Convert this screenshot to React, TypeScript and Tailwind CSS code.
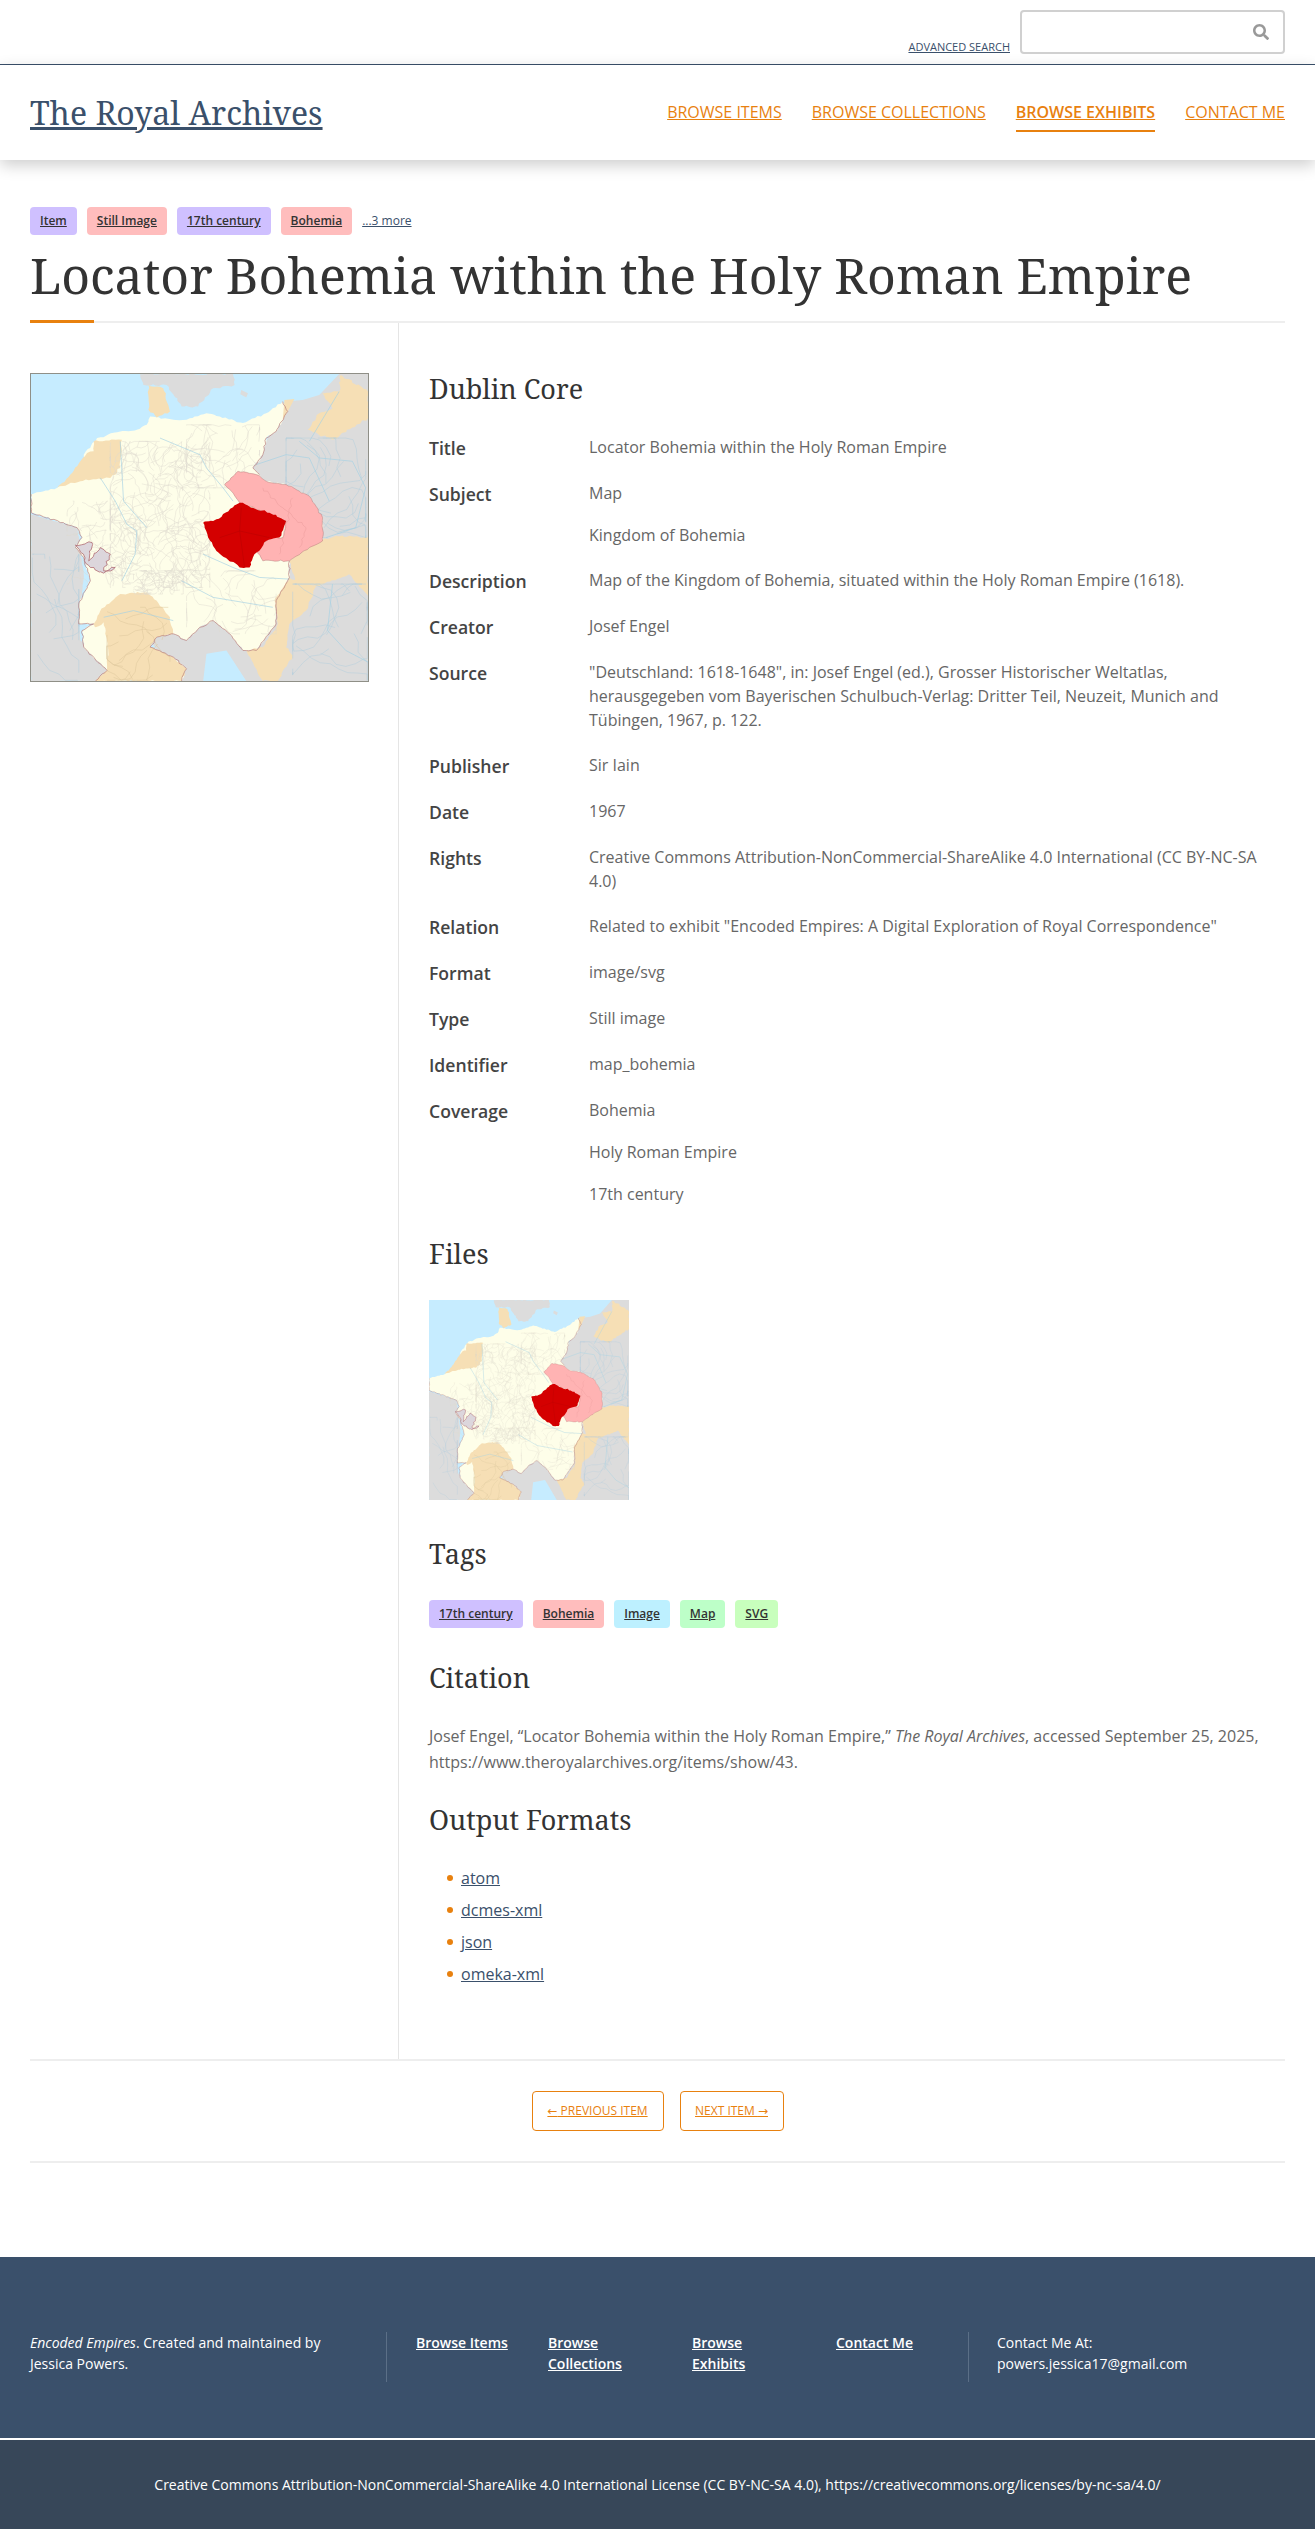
import React from "react";
import { FaSearch } from "react-icons/fa";

const serif = "font-['Noto_Serif','Droid_Serif','DejaVu_Serif',serif]";

// seeded random so the map draws the same every time
function makeRnd(start: number) {
    let seed = start;
    return () => {
        seed = (seed * 16807) % 2147483647;
        return seed / 2147483647;
    };
}

// takes "x,y x,y ..." and makes a jagged closed or open path, borders on the map are not straight
function rough(points: string, start: number, amount: number, closed = true) {
    const rnd = makeRnd(start);
    const pts = points.trim().split(/\s+/).map((p) => p.split(",").map(Number));
    const count = closed ? pts.length : pts.length - 1;
    let d = `M${pts[0][0]},${pts[0][1]}`;
    for (let i = 0; i < count; i++) {
        const [x1, y1] = pts[i];
        const [x2, y2] = pts[(i + 1) % pts.length];
        const steps = Math.max(1, Math.round(Math.hypot(x2 - x1, y2 - y1) / 9));
        for (let s = 1; s <= steps; s++) {
            const t = s / steps;
            const j = s === steps ? 0 : amount;
            d += ` L${(x1 + (x2 - x1) * t + (rnd() - 0.5) * j).toFixed(1)},${(y1 + (y2 - y1) * t + (rnd() - 0.5) * j).toFixed(1)}`;
        }
    }
    return closed ? d + " Z" : d;
}

function walks(start: number, n: number, x: number, y: number, w: number, h: number, len: number, step: number) {
    const rnd = makeRnd(start);
    const out: string[] = [];
    for (let i = 0; i < n; i++) {
        let px = x + rnd() * w;
        let py = y + rnd() * h;
        let dir = rnd() * Math.PI * 2;
        let d = `M${px.toFixed(0)},${py.toFixed(0)}`;
        for (let j = 0; j < len; j++) {
            dir += (rnd() - 0.5) * 1.5;
            px = Math.min(x + w, Math.max(x, px + Math.cos(dir) * step));
            py = Math.min(y + h, Math.max(y, py + Math.sin(dir) * step));
            d += ` L${px.toFixed(0)},${py.toFixed(0)}`;
        }
        out.push(d);
    }
    return out;
}

const hrePts =
    "92,460 170,440 240,390 250,340 290,290 360,270 410,265 440,250 450,225 520,235 560,235 620,215 660,225 730,245 800,215 850,180 865,210 830,270 800,290 790,340 760,380 780,400 800,420 860,430 930,465 970,530 970,600 930,620 870,660 870,710 830,780 830,850 770,930 730,930 690,880 640,840 600,860 560,900 520,880 470,890 450,920 520,950 560,985 545,1022 285,1022 320,990 250,920 245,870 280,850 235,850 235,790 270,720 250,650 225,620 245,590 230,560 92,515";
const pinkPts =
    "675,430 715,390 770,400 800,420 860,430 930,465 970,530 970,600 930,620 870,660 790,660 770,630 810,590 850,590 860,540 720,485 690,445";
const redPts =
    "610,545 650,535 720,485 760,500 810,515 860,540 840,590 800,600 760,650 750,680 720,680 650,630 625,590";
const westBorder =
    "92,460 92,515 230,560 245,590 225,620 250,650 270,720 235,790 235,850 280,850 245,870 250,920 320,990 285,1022";
const eastBorder = "850,180 865,210 830,270 800,290 790,340 760,380 780,400";
const southBorder =
    "870,660 870,710 830,780 830,850 770,930 730,930 690,880 640,840 600,860 560,900 520,880 470,890 450,920 520,950 560,985 545,1022";

const hrePath = rough(hrePts, 11, 5);
const greyLines = [
    ...walks(7, 190, 330, 300, 300, 440, 7, 14),
    ...walks(9, 60, 200, 480, 220, 250, 6, 11),
    ...walks(13, 55, 400, 690, 150, 70, 5, 10),
    ...walks(17, 40, 560, 250, 220, 190, 5, 20),
    ...walks(19, 35, 560, 690, 270, 190, 5, 20),
];
const blueWest = walks(23, 12, 95, 640, 140, 380, 9, 30);
const blueEast = [...walks(29, 22, 860, 290, 240, 300, 9, 30), ...walks(31, 16, 880, 730, 225, 290, 9, 30)];
const tanLines = walks(37, 14, 320, 800, 190, 220, 6, 26);

const rivers = [
    "M300,410 L345,480 L380,550 L410,570 L405,640 L365,720",
    "M480,290 L600,340 L620,380 L670,440 L700,480",
    "M610,640 L700,680 L780,710 L870,715",
    "M900,300 L960,350 L1060,360 L1100,440 L1070,560 L980,590",
    "M1000,730 L985,870 L1040,930 L1107,965",
    "M770,370 L860,340 L930,350 L990,480",
    "M930,300 L1020,150",
    "M310,830 L400,810 L520,840",
    "M545,720 L640,770 L820,800",
    "M360,300 L370,480 L440,560",
];

function MapArt({ className }: { className: string }) {
    return (
        <svg viewBox="91 97 1016 925" preserveAspectRatio="none" className={className}>
            <rect x="91" y="97" width="1016" height="925" fill="#c6ecff" />
            <path d={rough("91,520 230,560 250,700 235,850 240,900 340,1000 340,1022 91,1022", 3, 3)} fill="#dcdcdc" />
            <path d="M860,180 L910,175 L960,160 L1020,97 L1107,97 L1107,1022 L740,1022 L700,960 L680,930 L620,940 L610,1022 L540,1022 L450,900 L640,830 L870,640 L760,380 Z" fill="#dcdcdc" />
            <path d={rough("420,97 700,97 705,130 640,140 595,195 545,195 500,130 430,130", 5, 7)} fill="#dcdcdc" />
            <path d="M725,145 L745,155 L740,168 L722,158 Z" fill="#dcdcdc" />
            <path d={hrePath} fill="#fefee9" />
            <path d={rough("445,130 490,140 510,210 470,228 445,205", 6, 6)} fill="#f6dfb5" />
            <path d={rough("280,300 365,295 360,380 330,410 240,420 170,440 215,395 260,335 280,330", 8, 6)} fill="#f6dfb5" />
            <path d="M855,175 L885,172 L865,210 L850,235 Z" fill="#f6dfb5" />
            <path d={rough("300,810 360,760 440,755 470,780 510,830 520,880 470,890 450,920 520,950 560,985 545,1022 285,1022 320,990 320,900 280,850", 10, 6)} fill="#f6dfb5" />
            <path d={rough("970,155 1020,150 1025,100 1107,150 1107,230 1000,295 925,265 960,215 1000,200", 12, 7)} fill="#f6dfb5" />
            <path d={rough("870,660 960,600 1010,585 1107,590 1107,765 1050,700 960,735 890,730", 14, 6)} fill="#f6dfb5" />
            <path d={rough("870,710 950,735 920,810 870,850 860,920 880,945 835,1022 790,1022 740,930 790,920 835,850 825,780", 15, 6)} fill="#f6dfb5" />
            <path d={rough("260,875 310,845 320,900 325,945 290,955 250,920", 16, 5)} fill="#fefee9" />
            {greyLines.map((d, i) => (
                <path key={i} d={d} fill="none" stroke="#dedbcf" strokeWidth="1.4" />
            ))}
            {tanLines.map((d, i) => (
                <path key={i} d={d} fill="none" stroke="#dcc79c" strokeWidth="1.5" />
            ))}
            {[...blueWest, ...blueEast].map((d, i) => (
                <path key={i} d={d} fill="none" stroke="#b5cfdd" strokeWidth="1.6" />
            ))}
            {rivers.map((d, i) => (
                <path key={i} d={d} fill="none" stroke="#a5d2e4" strokeWidth="2" />
            ))}
            <path d={rough(pinkPts, 21, 5)} fill="#ffb3b3" stroke="#a76a6a" strokeWidth="1.2" />
            <path d={rough("790,440 850,500 920,560 900,620", 22, 8, false)} fill="none" stroke="#eb9c9c" strokeWidth="1.5" />
            <path d={rough("880,470 860,560 840,640", 24, 8, false)} fill="none" stroke="#eb9c9c" strokeWidth="1.5" />
            <path d={rough(redPts, 25, 6)} fill="#d40000" />
            <path d="M660,590 L720,570 L810,590 M725,500 L720,570 L735,680" fill="none" stroke="#b80000" strokeWidth="1.5" />
            <path d={rough(westBorder, 26, 5, false)} fill="none" stroke="#b47a7a" strokeWidth="2" />
            <path d={rough(eastBorder, 27, 5, false)} fill="none" stroke="#b47a7a" strokeWidth="2" />
            <path d={rough(southBorder, 28, 5, false)} fill="none" stroke="#b47a7a" strokeWidth="2" />
            <path d={rough("225,612 275,605 265,660 300,620 330,640 310,690 345,680 310,697 270,680", 30, 8)} fill="#dcd6dc" stroke="#a5555f" strokeWidth="2" />
        </svg>
    );
}

const fields: { label: string; values: string[] }[] = [
    { label: "Title", values: ["Locator Bohemia within the Holy Roman Empire"] },
    { label: "Subject", values: ["Map", "Kingdom of Bohemia"] },
    { label: "Description", values: ["Map of the Kingdom of Bohemia, situated within the Holy Roman Empire (1618)."] },
    { label: "Creator", values: ["Josef Engel"] },
    {
        label: "Source",
        values: [
            '"Deutschland: 1618-1648", in: Josef Engel (ed.), Grosser Historischer Weltatlas, herausgegeben vom Bayerischen Schulbuch-Verlag: Dritter Teil, Neuzeit, Munich and Tübingen, 1967, p. 122.',
        ],
    },
    { label: "Publisher", values: ["Sir Iain"] },
    { label: "Date", values: ["1967"] },
    { label: "Rights", values: ["Creative Commons Attribution-NonCommercial-ShareAlike 4.0 International (CC BY-NC-SA 4.0)"] },
    { label: "Relation", values: ['Related to exhibit "Encoded Empires: A Digital Exploration of Royal Correspondence"'] },
    { label: "Format", values: ["image/svg"] },
    { label: "Type", values: ["Still image"] },
    { label: "Identifier", values: ["map_bohemia"] },
    { label: "Coverage", values: ["Bohemia", "Holy Roman Empire", "17th century"] },
];

const formats = ["atom", "dcmes-xml", "json", "omeka-xml"];

function Tag({ text, color }: { text: string; color: string }) {
    return (
        <a href="#" className={`${color} block h-[28px] rounded-[4px] px-[10px] text-[12px] font-semibold leading-[28px] text-[#333] underline`}>
            {text}
        </a>
    );
}

function Heading({ children, className }: { children: React.ReactNode; className: string }) {
    return <h2 className={`${serif} text-[27px] leading-[36px] text-[#333] ${className}`}>{children}</h2>;
}

export default function App() {
    return (
        <div className="min-h-[2529px] bg-white font-['Open_Sans',sans-serif] text-[16px] text-[#666]">
            {/* top bar */}
            <div className="flex h-[65px] items-end justify-end gap-[10px] border-b border-[#3a506b] px-[30px] pb-[10px]">
                <a href="#" className="text-[11px] uppercase leading-[15px] text-[#3a506b] underline">
                    Advanced Search
                </a>
                <div className="flex h-[44px] w-[265px] items-center justify-end rounded-[4px] border-2 border-[#d0d0d0] pr-[14px]">
                    <FaSearch className="h-[16px] w-[16px] text-[#999]" />
                </div>
            </div>
            {/* header */}
            <header className="relative flex h-[95px] items-center justify-between bg-white px-[30px] shadow-[0_5px_15px_rgba(0,0,0,0.2)]">
                <a href="#" className={`${serif} text-[32px] leading-[44px] text-[#3a506b] underline`}>
                    The Royal Archives
                </a>
                <nav className="flex gap-[30px] pt-[6px] text-[16px] uppercase text-[#e8810f]">
                    <a href="#" className="border-b-2 border-transparent pb-[6px] underline">Browse Items</a>
                    <a href="#" className="border-b-2 border-transparent pb-[6px] underline">Browse Collections</a>
                    <a href="#" className="border-b-2 border-[#e8810f] pb-[6px] font-semibold underline">Browse Exhibits</a>
                    <a href="#" className="border-b-2 border-transparent pb-[6px] underline">Contact Me</a>
                </nav>
            </header>

            <main className="px-[30px] pt-[47px]">
                <div className="flex items-center gap-[10px]">
                    <Tag text="Item" color="bg-[#cfc0ff]" />
                    <Tag text="Still Image" color="bg-[#ffbdbd]" />
                    <Tag text="17th century" color="bg-[#cfc0ff]" />
                    <Tag text="Bohemia" color="bg-[#ffbdbd]" />
                    <a href="#" className="text-[12px] text-[#3a506b] underline">...3 more</a>
                </div>
                <div className="border-b-2 border-[#eee] pb-[14px] pt-[8px]">
                    <h1 className={`${serif} text-[50px] leading-[64px] text-[#333]`}>
                        Locator Bohemia within the Holy Roman Empire
                    </h1>
                </div>
                <div className="-mt-[3px] h-[3px] w-[64px] bg-[#e8810f]" />

                <div className="flex">
                    {/* left column */}
                    <div className="w-[369px] shrink-0 border-r border-[#e5e5e5] pt-[50px]">
                        <div className="h-[309px] w-[339px] border border-[#8f8f87]">
                            <MapArt className="block h-full w-full" />
                        </div>
                    </div>

                    {/* right column */}
                    <div className="flex-1 pb-[73px] pl-[30px] pt-[48px]">
                        <Heading className="mb-[28px]">Dublin Core</Heading>
                        {fields.map((f) => (
                            <div key={f.label} className="flex pb-[21px]">
                                <div className="w-[160px] shrink-0 pt-[1px] text-[17.6px] font-semibold leading-[24px] text-[#444]">
                                    {f.label}
                                </div>
                                <div className="flex flex-1 flex-col gap-[18px] leading-[24px]">
                                    {f.values.map((v) => (
                                        <p key={v}>{v}</p>
                                    ))}
                                </div>
                            </div>
                        ))}

                        <Heading className="mb-[28px] mt-[9px]">Files</Heading>
                        <MapArt className="mb-[36px] block h-[200px] w-[200px]" />

                        <Heading className="mb-[28px]">Tags</Heading>
                        <div className="mb-[32px] flex gap-[10px]">
                            <Tag text="17th century" color="bg-[#cfc0ff]" />
                            <Tag text="Bohemia" color="bg-[#ffbdbd]" />
                            <Tag text="Image" color="bg-[#bdf0ff]" />
                            <Tag text="Map" color="bg-[#bdffc8]" />
                            <Tag text="SVG" color="bg-[#c8ffbd]" />
                        </div>

                        <Heading className="mb-[27px]">Citation</Heading>
                        <p className="mb-[27px] leading-[26px]">
                            Josef Engel, “Locator Bohemia within the Holy Roman Empire,” <em>The Royal Archives</em>, accessed September 25, 2025, https://www.theroyalarchives.org/items/show/43.
                        </p>

                        <Heading className="mb-[28px]">Output Formats</Heading>
                        <ul className="flex flex-col gap-[8px] pl-[18px] leading-[24px]">
                            {formats.map((name) => (
                                <li key={name} className="flex items-center gap-[8px]">
                                    <span className="h-[6px] w-[6px] rounded-full bg-[#e8810f]" />
                                    <a href="#" className="text-[#3a506b] underline">{name}</a>
                                </li>
                            ))}
                        </ul>
                    </div>
                </div>

                {/* pagination */}
                <div className="flex justify-center gap-[16px] border-y-2 border-[#eee] py-[30px]">
                    <a href="#" className="flex h-[40px] w-[132px] items-center justify-center rounded-[4px] border border-[#e8810f] text-[12px] uppercase text-[#e8810f] underline">
                        <span><span className="font-['DejaVu_Sans',sans-serif]">←</span> Previous Item</span>
                    </a>
                    <a href="#" className="flex h-[40px] w-[104px] items-center justify-center rounded-[4px] border border-[#e8810f] text-[12px] uppercase text-[#e8810f] underline">
                        <span>Next Item <span className="font-['DejaVu_Sans',sans-serif]">→</span></span>
                    </a>
                </div>
            </main>

            {/* footer */}
            <footer className="mt-[94px] text-[14px] leading-[21px] text-white">
                <div className="flex h-[181px] items-center bg-[#3a506b] px-[30px] pt-[18px]">
                    <div className="h-[50px] w-[357px] border-r border-[#5b6f87] pr-[20px]">
                        <em>Encoded Empires</em>. Created and maintained by Jessica Powers.
                    </div>
                    <div className="flex h-[50px] w-[582px] gap-[30px] border-r border-[#5b6f87] pl-[29px] font-semibold">
                        <a href="#" className="w-[102px] underline">Browse Items</a>
                        <a href="#" className="w-[114px] underline">Browse<br />Collections</a>
                        <a href="#" className="w-[114px] underline">Browse<br />Exhibits</a>
                        <a href="#" className="underline">Contact Me</a>
                    </div>
                    <div className="h-[50px] flex-1 pl-[28px]">
                        Contact Me At:
                        <br />
                        powers.jessica17@gmail.com
                    </div>
                </div>
                <div className="h-[92px] border-t-2 border-white bg-[#374759] text-center leading-[90px]">
                    Creative Commons Attribution-NonCommercial-ShareAlike 4.0 International License (CC BY-NC-SA 4.0), https://creativecommons.org/licenses/by-nc-sa/4.0/
                </div>
            </footer>
        </div>
    );
}
